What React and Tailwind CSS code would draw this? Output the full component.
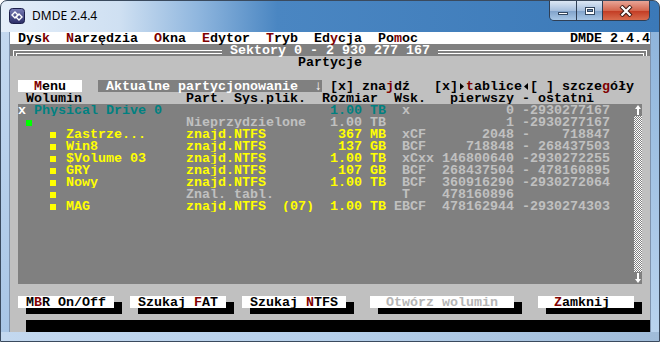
import React from 'react';

const LG = 'text-[#c0c0c0]';
const WH = 'text-white';
const YE = 'text-[#ffff00]';
const TE = 'text-[#008080]';
const RD = 'text-[#800000]';

function Cells({ start, width, items }) {
  const out = [];
  let cur = start;
  items.forEach(([col, text, cls], i) => {
    if (col > cur) out.push(<span key={'s' + i} className="whitespace-pre pt-[1px]">{' '.repeat(col - cur)}</span>);
    if (text === '■') {
      out.push(
        <span key={i} className="w-[8px] shrink-0">
          <span className={`block mt-[4px] w-[6px] h-[6px] ${cls}`} />
        </span>
      );
      cur = col + 1;
    } else {
      out.push(<span key={i} className={`whitespace-pre pt-[1px] ${cls}`}>{text}</span>);
      cur = col + [...text].length;
    }
  });
  if (cur < start + width) out.push(<span key="end" className="whitespace-pre pt-[1px]">{' '.repeat(start + width - cur)}</span>);
  return out;
}

const listRows = [
  [[1, 'x', WH], [3, 'Physical Drive 0', TE], [40, '1.00 TB', TE], [49, 'x', LG], [62, '0', LG], [64, '-2930277167', LG]],
  [[2, '■', 'bg-[#00ff00]'], [22, 'Nieprzydzielone', LG], [40, '1.00 TB', LG], [62, '1', LG], [64, '-2930277167', LG]],
  [[5, '■', 'bg-[#ffff00]'], [7, 'Zastrze...', YE], [22, 'znajd.NTFS', YE], [41, '367 MB', YE], [49, 'xCF', LG], [59, '2048', LG], [64, '-', LG], [69, '718847', LG]],
  [[5, '■', 'bg-[#ffff00]'], [7, 'Win8', YE], [22, 'znajd.NTFS', YE], [41, '137 GB', YE], [49, 'BCF', LG], [57, '718848', LG], [64, '-', LG], [66, '268437503', LG]],
  [[5, '■', 'bg-[#ffff00]'], [7, '$Volume 03', YE], [22, 'znajd.NTFS', YE], [40, '1.00 TB', YE], [49, 'xCxx', LG], [54, '146800640', LG], [64, '-2930272255', LG]],
  [[5, '■', 'bg-[#ffff00]'], [7, 'GRY', YE], [22, 'znajd.NTFS', YE], [41, '107 GB', YE], [49, 'BCF', LG], [54, '268437504', LG], [64, '-', LG], [66, '478160895', LG]],
  [[5, '■', 'bg-[#ffff00]'], [7, 'Nowy', YE], [22, 'znajd.NTFS', YE], [40, '1.00 TB', YE], [49, 'BCF', LG], [54, '360916290', LG], [64, '-2930272064', LG]],
  [[5, '■', 'bg-[#ffff00]'], [22, 'Znal. tabl.', LG], [49, 'T', LG], [54, '478160896', LG]],
  [[5, '■', 'bg-[#ffff00]'], [7, 'MAG', YE], [22, 'znajd.NTFS', YE], [34, '(07)', YE], [40, '1.00 TB', YE], [48, 'EBCF', LG], [54, '478162944', LG], [64, '-2930274303', LG]],
];

function Arrow({ up }) {
  return (
    <svg width="8" height="12" viewBox="0 0 8 12">
      {up ? (
        <path d="M4 1 L7 5 L5 5 L5 11 L3 11 L3 5 L1 5 Z" fill="#fff" />
      ) : (
        <path d="M4 11 L7 7 L5 7 L5 1 L3 1 L3 7 L1 7 Z" fill="#fff" />
      )}
    </svg>
  );
}

function Row({ className = '', children }) {
  return <div className={`flex h-[12px] leading-[11px] ${className}`}>{children}</div>;
}

function ListRow({ idx }) {
  const items = listRows[idx] || [];
  let scroll;
  if (idx === 0) scroll = <span className="w-[8px] bg-[#808080]"><Arrow up /></span>;
  else if (idx === 14) scroll = <span className="w-[8px] bg-[#808080]"><Arrow /></span>;
  else scroll = <span className="w-[8px] bg-[repeating-conic-gradient(#ffffff_0_25%,#808080_0_50%)] bg-[length:2px_2px]" />;
  return (
    <Row className="bg-[#c0c0c0]">
      <span className="w-[8px]" />
      <span className="flex w-[616px] bg-[#808080]">
        <Cells start={1} width={77} items={items} />
      </span>
      {scroll}
      <span className="w-[8px]" />
    </Row>
  );
}

function Btn({ children }) {
  return <span className="whitespace-pre pt-[1px] bg-white text-black">{children}</span>;
}
const LowShadow = () => (
  <span className="w-[8px] flex flex-col"><span className="h-[6px]" /><span className="h-[6px] bg-black" /></span>
);

function Terminal() {
  return (
    <div className="w-[640px] font-['Liberation_Mono',monospace] font-bold text-[13.333px] text-black">
      {/* row 0 menu */}
      <Row className="bg-white">
        <span className="whitespace-pre pt-[1px]"> Dys<span className={RD}>k</span>  <span className={RD}>N</span>arzędzia  <span className={RD}>O</span>kna  <span className={RD}>E</span>dytor  <span className={RD}>T</span>ryb  Ed<span className={RD}>y</span>cja  Po<span className={RD}>m</span>oc</span>
        <span className="flex-1" />
        <span className="whitespace-pre pt-[1px]">DMDE 2.4.4</span>
      </Row>
      {/* row 1 */}
      <Row className="bg-[#808080] text-white">
        <span className="w-[8px] relative">
          <span className="absolute left-[3px] top-[6px] w-[5px] h-[6px] border-l border-t border-white" />
          <span className="absolute left-[6px] top-[9px] w-[2px] h-[3px] border-l border-t border-white" />
        </span>
        <span className="flex-1 flex flex-col pt-[6px]"><span className="h-[1px] bg-white" /><span className="h-[2px]" /><span className="h-[1px] bg-white" /></span>
        <span className="whitespace-pre pt-[1px]"> Sektory 0 - 2 930 277 167 </span>
        <span className="flex-1 flex flex-col pt-[6px]"><span className="h-[1px] bg-white" /><span className="h-[2px]" /><span className="h-[1px] bg-white" /></span>
        <span className="w-[8px] relative">
          <span className="absolute left-0 top-[6px] w-[5px] h-[6px] border-r border-t border-white" />
          <span className="absolute left-0 top-[9px] w-[2px] h-[3px] border-r border-t border-white" />
        </span>
      </Row>
      {/* row 2 */}
      <Row className="bg-[#c0c0c0]">
        <Cells start={0} width={80} items={[[36, 'Partycje', '']]} />
      </Row>
      <Row className="bg-[#c0c0c0]" />
      {/* row 4 */}
      <Row className="bg-[#c0c0c0]">
        <span className="whitespace-pre pt-[1px]"> </span>
        <span className="whitespace-pre pt-[1px] bg-white">  <span className={RD}>M</span>enu  </span>
        <span className="whitespace-pre pt-[1px]">  </span>
        <span className="whitespace-pre pt-[1px] bg-[#808080] text-white"> Aktualne partycjonowanie  ↓</span>
        <span className="whitespace-pre pt-[1px]"> [x] zna<span className={RD}>j</span>dź   [x]</span>
        <span className="w-[8px] flex items-center justify-center"><svg width="8" height="12" viewBox="0 0 8 12"><path d="M2 3 L6 6.5 L2 10 Z" fill="#000" /></svg></span>
        <span className="whitespace-pre pt-[1px]"><span className={RD}>t</span>ablice</span>
        <span className="w-[8px] flex items-center justify-center"><svg width="8" height="12" viewBox="0 0 8 12"><path d="M6 3 L2 6.5 L6 10 Z" fill="#000" /></svg></span>
        <span className="whitespace-pre pt-[1px]">[ ] szcze<span className={RD}>g</span>óły  </span>
      </Row>
      {/* row 5 */}
      <Row className="bg-[#c0c0c0]">
        <Cells start={0} width={80} items={[[2, 'Wolumin', ''], [22, 'Part. Sys.plik.', ''], [39, 'Rozmiar', ''], [48, 'Wsk.', ''], [55, 'pierwszy - ostatni', '']]} />
      </Row>
      {Array.from({ length: 15 }).map((_, i) => (
        <ListRow key={i} idx={i} />
      ))}
      <Row className="bg-[#c0c0c0]" />
      {/* row 22 buttons */}
      <Row className="bg-[#c0c0c0]">
        <span className="w-[8px]" />
        <Btn> M<span className={RD}>B</span>R On/Off </Btn>
        <LowShadow />
        <span className="w-[8px]" />
        <Btn> Szukaj <span className={RD}>F</span>AT </Btn>
        <LowShadow />
        <span className="w-[8px]" />
        <Btn> Szukaj <span className={RD}>N</span>TFS </Btn>
        <LowShadow />
        <span className="w-[16px]" />
        <Btn>  <span className="text-[#b4b4b4]">Otwórz wolumin</span>  </Btn>
        <LowShadow />
        <span className="w-[16px]" />
        <Btn>  <span className={RD}>Z</span>amknij   </Btn>
        <LowShadow />
        <span className="w-[8px]" />
      </Row>
      {/* row 23 shadows */}
      <Row className="bg-[#c0c0c0]">
        <span className="w-[16px]" />
        <span className="w-[96px] flex flex-col"><span className="h-[6px] bg-black" /></span>
        <span className="w-[16px]" />
        <span className="w-[96px] flex flex-col"><span className="h-[6px] bg-black" /></span>
        <span className="w-[16px]" />
        <span className="w-[104px] flex flex-col"><span className="h-[6px] bg-black" /></span>
        <span className="w-[24px]" />
        <span className="w-[144px] flex flex-col"><span className="h-[6px] bg-black" /></span>
        <span className="w-[24px]" />
        <span className="w-[96px] flex flex-col"><span className="h-[6px] bg-black" /></span>
      </Row>
      <Row className="bg-black">
        <span className="w-[16px] bg-[#c0c0c0]" />
      </Row>
    </div>
  );
}

function AppIcon() {
  return (
    <svg width="16" height="16" viewBox="0 0 16 16">
      <defs>
        <linearGradient id="ig" x1="0" y1="0" x2="0" y2="1">
          <stop offset="0" stopColor="#7b7fb8" />
          <stop offset="1" stopColor="#2a2d66" />
        </linearGradient>
      </defs>
      <rect x="0.5" y="0.5" width="15" height="15" rx="3" fill="url(#ig)" stroke="#1c1f4a" />
      <path d="M6 4 L9 7 L6 10 L3 7 Z" fill="none" stroke="#fff" strokeWidth="1.4" />
      <path d="M10 6 L13 9 L10 12 L7 9 Z" fill="none" stroke="#fff" strokeWidth="1.4" />
    </svg>
  );
}

export default function App() {
  return (
    <div className="w-[660px] h-[342px] bg-white overflow-hidden">
      <div className="w-[660px] h-[342px] flex flex-col rounded-t-[7px] border border-[#3a4a5e] bg-[linear-gradient(90deg,#e4eef9_0%,#cfe0f2_18%,#8fb6de_30%,#4a86c2_42%,#3b79b8_100%)]">
        <div className="h-[31px] flex items-start">
          <div className="ml-[8px] mt-[7px]"><AppIcon /></div>
          <div className="ml-[7px] mt-[6px] text-[12px] font-['Noto_Sans',sans-serif] text-black">DMDE 2.4.4</div>
          <div className="flex-1" />
          <div className="mr-[9px] flex h-[20px] rounded-b-[5px] border border-t-0 border-[#2f3f55] overflow-hidden">
            <div className="w-[27px] bg-[linear-gradient(180deg,#dce7f4,#a7c0de_50%,#7fa1c9_51%,#a8c7e6)] border-r border-[#2f3f55] flex items-center justify-center">
              <div className="mt-[5px] w-[10px] h-[3px] bg-white border border-[#33475f]" />
            </div>
            <div className="w-[26px] bg-[linear-gradient(180deg,#dce7f4,#a7c0de_50%,#7fa1c9_51%,#a8c7e6)] border-r border-[#2f3f55] flex items-center justify-center">
              <div className="w-[10px] h-[8px] bg-white border border-[#33475f] flex items-center justify-center"><div className="w-[6px] h-[3px] bg-[#6f8fb6] border border-[#33475f]" /></div>
            </div>
            <div className="w-[46px] bg-[linear-gradient(180deg,#e8a597,#d4674f_50%,#c23a22_51%,#d86c4e)] flex items-center justify-center">
              <svg width="14" height="12" viewBox="0 0 14 12">
                <path d="M2 1 L12 11 M12 1 L2 11" stroke="#3a1a14" strokeWidth="4.2" fill="none" />
                <path d="M2.5 1.5 L11.5 10.5 M11.5 1.5 L2.5 10.5" stroke="#fff" strokeWidth="2.2" fill="none" />
              </svg>
            </div>
          </div>
        </div>
        <div className="flex h-[300px]">
          <div className="w-[9px] bg-[linear-gradient(180deg,#c3d8ef,#a9c6e6)] border-r border-[#7f93ad]" />
          <Terminal />
          <div className="w-[9px] bg-[linear-gradient(180deg,#8fb5dc,#b9d3ee)] border-l border-[#7f93ad]" />
        </div>
        <div className="flex-1 bg-[linear-gradient(90deg,#c3d8ef,#b5cfea_50%,#a0bcd9)]" />
      </div>
    </div>
  );
}
